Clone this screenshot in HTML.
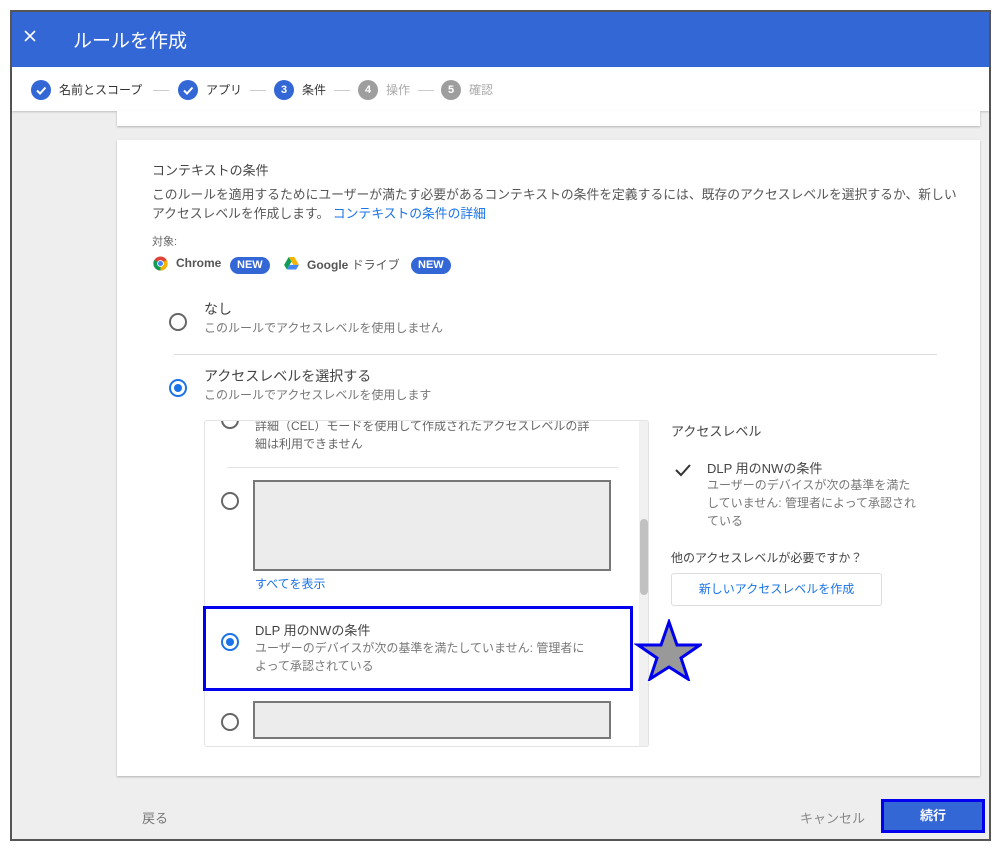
<!DOCTYPE html>
<html><head><meta charset="utf-8"><style>
*{box-sizing:border-box;margin:0;padding:0}
body{width:1000px;height:848px;background:#fff;position:relative;overflow:hidden;font-family:"Liberation Sans","Noto Sans CJK JP",sans-serif;color:#3c4043}
.a{position:absolute}
.frame{left:10px;top:10px;width:981px;height:831px;border:2px solid #555;background:#eeeeee;overflow:hidden}
.t{position:absolute;white-space:nowrap}
.radio{position:absolute;width:18px;height:18px;border:2px solid #666;border-radius:50%;background:#fff}
.radio.on{border-color:#1a73e8}
.radio.on::after{content:"";position:absolute;left:3px;top:3px;width:8px;height:8px;border-radius:50%;background:#1a73e8}
.step{position:absolute;top:80px;width:20px;height:20px;border-radius:50%;color:#fff;font-size:11px;font-weight:bold;text-align:center;line-height:20px}
.badge{position:absolute;background:#3367d6;color:#fff;font-size:11px;font-weight:bold;border-radius:9px;height:17px;line-height:17px;padding:0 7px}
.gray{position:absolute;background:#ececec;border:2px solid #777}
</style></head><body>
<div class="a frame"></div>
<div class="a" style="left:12px;top:12px;width:977px;height:55px;background:#3367d6"></div>
<svg class="a" style="left:23px;top:29px" width="14" height="14"><path d="M2 2l10 10M12 2L2 12" stroke="#fff" stroke-width="1.6"/></svg>
<div class="t" style="left:73px;top:26px;color:#fff;font-size:19px">ルールを作成</div>
<div class="a" style="left:12px;top:67px;width:977px;height:44px;background:#fff;box-shadow:0 1px 2px rgba(0,0,0,.2)"></div>
<div class="step" style="left:31px;background:#3367d6"><svg width="20" height="20"><path d="M6 10.5l3 3 5.5-6" stroke="#fff" stroke-width="2" fill="none"/></svg></div>
<div class="t" style="left:59px;top:81px;font-size:12px;color:#333">名前とスコープ</div>
<div class="a" style="left:153px;top:90px;width:16px;height:1px;background:#ccc"></div>
<div class="step" style="left:178px;background:#3367d6"><svg width="20" height="20"><path d="M6 10.5l3 3 5.5-6" stroke="#fff" stroke-width="2" fill="none"/></svg></div>
<div class="t" style="left:206px;top:81px;font-size:12px;color:#333">アプリ</div>
<div class="a" style="left:250px;top:90px;width:16px;height:1px;background:#ccc"></div>
<div class="step" style="left:274px;background:#3367d6">3</div>
<div class="t" style="left:302px;top:81px;font-size:12px;color:#333">条件</div>
<div class="a" style="left:334px;top:90px;width:16px;height:1px;background:#ccc"></div>
<div class="step" style="left:358px;background:#9e9e9e">4</div>
<div class="t" style="left:386px;top:81px;font-size:12px;color:#aaa">操作</div>
<div class="a" style="left:418px;top:90px;width:16px;height:1px;background:#ccc"></div>
<div class="step" style="left:441px;background:#9e9e9e">5</div>
<div class="t" style="left:469px;top:81px;font-size:12px;color:#aaa">確認</div>
<div class="a" style="left:117px;top:111px;width:863px;height:15px;background:#fff;box-shadow:0 1px 2px rgba(0,0,0,.25)"></div>
<div class="a" style="left:117px;top:140px;width:863px;height:636px;background:#fff;box-shadow:0 1px 2px rgba(0,0,0,.25)"></div>
<div class="t" style="left:152px;top:160px;font-size:13px;color:#444">コンテキストの条件</div>
<div class="t" style="left:152px;top:184px;font-size:12.8px;color:#555">このルールを適用するためにユーザーが満たす必要があるコンテキストの条件を定義するには、既存のアクセスレベルを選択するか、新しい</div>
<div class="t" style="left:152px;top:203px;font-size:12.8px;color:#555">アクセスレベルを作成します。 <span style="color:#1a73e8">コンテキストの条件の詳細</span></div>
<div class="t" style="left:152px;top:233px;font-size:11px;color:#666">対象:</div>
<svg class="a" style="left:153px;top:256px" width="15" height="15" viewBox="0 0 16 16"><circle cx="8" cy="8" r="7.5" fill="#db4437"/><path d="M8 8L1.5 4.2A7.5 7.5 0 0 0 8 15.5z" fill="#0f9d58"/><path d="M8 8l6.5-3.8A7.5 7.5 0 0 1 8 15.5z" fill="#f4b400"/><circle cx="8" cy="8" r="3.6" fill="#fff"/><circle cx="8" cy="8" r="2.7" fill="#4285f4"/></svg>
<div class="t" style="left:176px;top:256px;font-size:12px;font-weight:bold;color:#555">Chrome</div>
<div class="badge" style="left:230px;top:257px">NEW</div>
<svg class="a" style="left:284px;top:257px" width="15" height="13" viewBox="0 0 16 14"><path d="M5 0h6l5 8.5h-6z" fill="#f4b400"/><path d="M5 0L0 8.5l3 5L8 5z" fill="#0f9d58"/><path d="M3 13.5h10l3-5H6z" fill="#4285f4"/></svg>
<div class="t" style="left:307px;top:256px;font-size:12px;font-weight:bold;color:#555">Google <span style="font-weight:normal">ドライブ</span></div>
<div class="badge" style="left:411px;top:257px">NEW</div>
<div class="radio" style="left:169px;top:313px"></div>
<div class="t" style="left:204px;top:299px;font-size:14px;color:#444">なし</div>
<div class="t" style="left:204px;top:319px;font-size:12px;color:#777">このルールでアクセスレベルを使用しません</div>
<div class="a" style="left:174px;top:354px;width:763px;height:1px;background:#ddd"></div>
<div class="radio on" style="left:169px;top:379px"></div>
<div class="t" style="left:204px;top:366px;font-size:14px;color:#444">アクセスレベルを選択する</div>
<div class="t" style="left:204px;top:386px;font-size:12px;color:#777">このルールでアクセスレベルを使用します</div>
<div class="a" style="left:204px;top:420px;width:445px;height:327px;border:1px solid #e3e3e3;border-radius:3px;overflow:hidden;background:#fff">
  <div class="radio" style="left:16px;top:-10px"></div>
  <div class="t" style="left:50px;top:-4px;font-size:12px;color:#666">詳細（CEL）モードを使用して作成されたアクセスレベルの詳</div>
  <div class="t" style="left:50px;top:14px;font-size:12px;color:#666">細は利用できません</div>
  <div class="a" style="left:22px;top:46px;width:391px;height:1px;background:#e3e3e3"></div>
  <div class="radio" style="left:16px;top:71px"></div>
  <div class="gray" style="left:48px;top:59px;width:358px;height:91px"></div>
  <div class="t" style="left:50px;top:154px;font-size:12px;color:#1a73e8">すべてを表示</div>
  <div class="radio on" style="left:16px;top:212px"></div>
  <div class="t" style="left:50px;top:199px;font-size:13px;color:#444">DLP 用のNWの条件</div>
  <div class="t" style="left:50px;top:218px;font-size:12px;color:#777">ユーザーのデバイスが次の基準を満たしていません: 管理者に</div>
  <div class="t" style="left:50px;top:236px;font-size:12px;color:#777">よって承認されている</div>
  <div class="radio" style="left:16px;top:292px"></div>
  <div class="gray" style="left:48px;top:280px;width:358px;height:38px"></div>
  <div class="a" style="left:434px;top:0;width:10px;height:327px;background:#f1f1f1"></div>
  <div class="a" style="left:435px;top:98px;width:8px;height:76px;background:#c1c1c1;border-radius:4px"></div>
</div>
<div class="a" style="left:203px;top:606px;width:430px;height:85px;border:3px solid #0000ee"></div>
<svg class="a" style="left:634px;top:619px" width="68" height="62" viewBox="0 0 68 62"><path d="M35 3l8 23h23l-19 13 7 21-19-12-19 12 7-21L4 26h23z" fill="#999" stroke="#0000ee" stroke-width="3"/></svg>
<div class="t" style="left:671px;top:421px;font-size:13px;color:#444">アクセスレベル</div>
<svg class="a" style="left:674px;top:463px" width="18" height="14"><path d="M2 7l5 5 9-10" stroke="#333" stroke-width="2" fill="none"/></svg>
<div class="t" style="left:707px;top:458px;font-size:13px;color:#444">DLP 用のNWの条件</div>
<div class="t" style="left:707px;top:476px;font-size:12px;color:#777;line-height:18px;white-space:normal;width:230px">ユーザーのデバイスが次の基準を満た<br>していません: 管理者によって承認され<br>ている</div>
<div class="t" style="left:671px;top:549px;font-size:12px;color:#444">他のアクセスレベルが必要ですか？</div>
<div class="a" style="left:671px;top:573px;width:211px;height:33px;border:1px solid #ddd;border-radius:3px;color:#1a73e8;font-size:12px;text-align:center;line-height:31px">新しいアクセスレベルを作成</div>
<div class="t" style="left:142px;top:808px;font-size:13px;color:#777">戻る</div>
<div class="t" style="left:800px;top:808px;font-size:13px;color:#888">キャンセル</div>
<div class="a" style="left:881px;top:799px;width:104px;height:34px;background:#3367d6;border:3px solid #0000ee;color:#fff;font-size:13px;font-weight:bold;text-align:center;line-height:28px">続行</div>
</body></html>
